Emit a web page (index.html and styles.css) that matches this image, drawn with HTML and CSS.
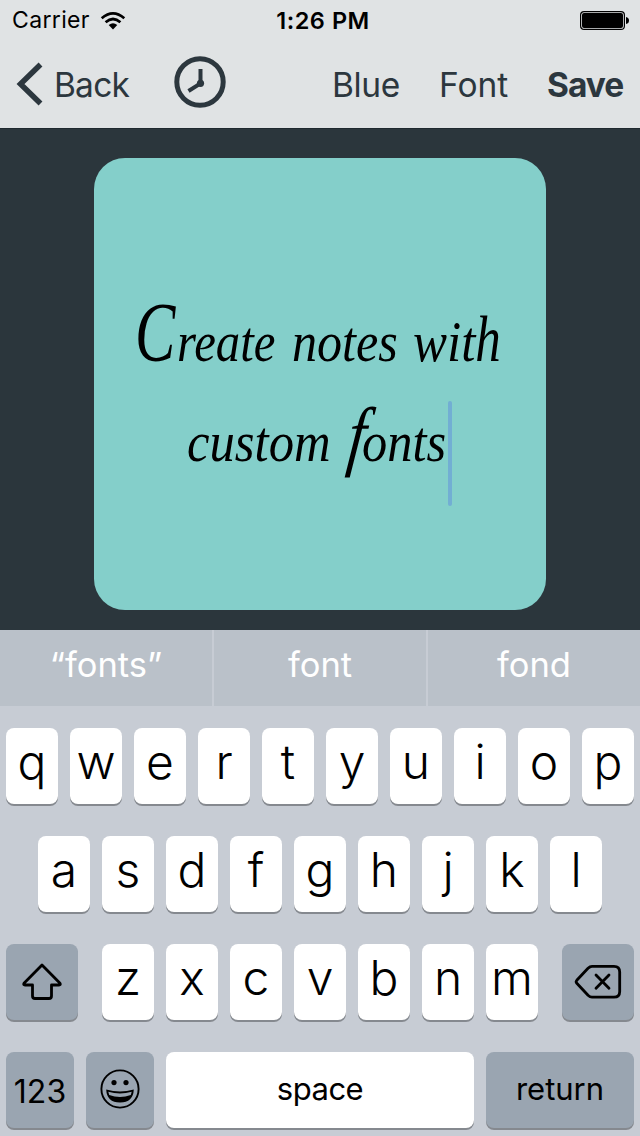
FILE: index.html
```
<!DOCTYPE html>
<html lang="en">
<head>
<meta charset="utf-8">
<title>Notes</title>
<link rel="stylesheet" href="styles.css">
</head>
<body>
<div class="screen">
  <header class="top">
    <div class="status">
      <div class="status-left"><span class="carrier">Carrier</span>
        <svg class="wifi" width="26" height="20" viewBox="0 0 26 20"><g fill="none" stroke="#000" stroke-width="2.7"><path d="M1.7 7.3Q13 -2.5 24.3 7.3"/><path d="M5.6 11.3Q13 4.7 20.4 11.3"/></g><path d="M8.7 14Q13 10.5 17.3 14L13 18.6Z"/></svg>
      </div>
      <span class="time">1:26 PM</span>
      <svg class="battery" width="50" height="20" viewBox="0 0 50 20"><rect x=".6" y=".6" width="43.8" height="17.8" rx="3.5" fill="none" stroke="#000" stroke-width="1.2"/><rect x="2" y="2" width="41" height="15" rx="2"/><path d="M46 6Q49 6.5 49 9.5T46 13Z"/></svg>
    </div>
    <nav class="nav">
      <svg class="chevron" width="28" height="44" viewBox="0 0 28 44"><path d="M24.5 2.5L4.5 22L24.5 41.5" fill="none" stroke="#2c373e" stroke-width="5.5"/></svg>
      <span class="back">Back</span>
      <svg class="clock" width="52" height="52" viewBox="0 0 52 52"><g fill="none" stroke="#2c373e"><circle cx="26" cy="26" r="23.2" stroke-width="5"/><path d="M26.5 13V27.5L14.5 35" stroke-width="4"/></g><circle cx="26.5" cy="27.3" r="3.6" fill="#2c373e"/></svg>
      <span class="blue">Blue</span><span class="font">Font</span><span class="save">Save</span>
    </nav>
  </header>
  <main class="canvas">
    <div class="note">
      <div class="line"><span class="initial">C</span><span class="create">reate</span><span class="notes">notes</span><span class="with">wit<span class="tall-h">h</span></span></div>
      <div class="line second"><span class="custom">custom</span><span class="fonts"><span class="long-f">f</span>onts</span><i class="caret"></i></div>
    </div>
  </main>
  <section class="keyboard">
    <div class="suggestions"><span>“fonts”</span><span>font</span><span>fond</span></div>
    <div class="keys">
      <div class="row"><b>q</b><b>w</b><b>e</b><b>r</b><b>t</b><b>y</b><b>u</b><b>i</b><b>o</b><b>p</b></div>
      <div class="row"><b>a</b><b>s</b><b>d</b><b>f</b><b>g</b><b>h</b><b>j</b><b>k</b><b>l</b></div>
      <div class="row spread">
        <div class="key dark wide"><svg width="42" height="38" viewBox="0 0 42 38"><path d="M21 2L39 20.3Q40 22 38 22H30.5V33Q30.5 35.5 28 35.5H14Q11.5 35.5 11.5 33V22H4Q2 22 3 20.3Z" fill="none" stroke="#000" stroke-width="2.8" stroke-linejoin="round"/></svg></div>
        <div class="row"><b>z</b><b>x</b><b>c</b><b>v</b><b>b</b><b>n</b><b>m</b></div>
        <div class="key dark wide"><svg width="48" height="36" viewBox="0 0 48 36"><path d="M18 2.3H40Q45.7 2.3 45.7 8V27.5Q45.7 33.2 40 33.2H18Q16 33.2 14 31.3L2.8 19.2Q1.5 17.8 2.8 16.3L14 4.2Q16 2.3 18 2.3Z" fill="none" stroke="#000" stroke-width="2.8"/><path d="M22 11L35 24.3M35 11L22 24.3" stroke="#000" stroke-width="2.8" stroke-linecap="round"/></svg></div>
      </div>
      <div class="row">
        <div class="key dark numbers">123</div>
        <div class="key dark emoji"><svg width="40" height="40" viewBox="0 0 40 40"><circle cx="20" cy="20" r="18.6" fill="none" stroke="#000" stroke-width="1.9"/><circle cx="14" cy="13.6" r="2.6"/><circle cx="26" cy="13.6" r="2.6"/><path d="M6.2 20.5Q20 24.5 33.8 20.5Q33.2 33.5 20 33.5T6.2 20.5Z"/><path d="M8.3 22.8Q20 26.3 31.7 22.8L30.8 26Q20 30 9.2 26Z" fill="#98a4b1"/></svg></div>
        <div class="key space">space</div>
        <div class="key dark return">return</div>
      </div>
    </div>
  </section>
</div>
</body>
</html>
```
FILE: styles.css
```
* { box-sizing: border-box; }
body { margin: 0; font-family: Inter, "Liberation Sans", sans-serif; }
svg { display: block; flex: none; }
.screen { width: 640px; height: 1136px; display: flex; flex-direction: column; overflow: hidden; background: #2b363c; }
.top { height: 128px; background: #e0e3e4; }
.status { height: 41px; display: grid; grid-template-columns: 1fr auto 1fr; align-items: center; padding: 0 10px 0 12px; font-size: 23px; line-height: 41px; }
.status-left { display: flex; align-items: center; gap: 10px; }
.carrier { letter-spacing: .35px; }
.time { font-weight: 600; font-size: 23.5px; letter-spacing: .55px; padding-left: 4px; }
.battery { justify-self: end; }
.nav { height: 87px; display: flex; align-items: flex-start; color: #2c373e; font-size: 33.5px; line-height: 88px; white-space: nowrap; }
.chevron { margin: 21px 10px 0 16px; }
.back { width: 120px; letter-spacing: -.8px; }
.clock { margin-top: 15px; }
.blue { margin-left: 106px; width: 107px; letter-spacing: -.4px; }
.font { width: 108px; }
.save { font-weight: 650; letter-spacing: -1px; }
.canvas { height: 502px; padding: 29px 94px; border-top: 1px solid #1f292f; }
.note { width: 452px; height: 452px; border-radius: 31px; background: #84cfca; padding-top: 124px; color: #000; font-family: "Liberation Serif", "Times New Roman", serif; font-style: italic; font-size: 56px; line-height: 102px; }
.line { height: 102px; display: flex; align-items: baseline; padding-left: 41px; white-space: nowrap; }
.line.second { padding-left: 93px; margin-top: 7px; }
.line > span { display: block; flex: none; transform-origin: left; }
.line .initial { width: 42px; font-size: 84px; line-height: 102px; transform: scaleX(.72); }
.line .create { width: 115px; transform: scaleX(.87); }
.line .notes { width: 121px; transform: scaleX(.895); }
.line .with { transform: scaleX(.91); }
.line .custom { width: 161px; transform: scaleX(.905); }
.line .fonts { width: 100px; transform: scaleX(.9); }
.tall-h { display: inline-block; line-height: 1; transform: scaleY(1.18); transform-origin: 50% 83%; }
.long-f { display: inline-block; line-height: 1; transform: skewX(-7deg) scale(1.25, 1.38); transform-origin: 60% 82%; }
.caret { align-self: flex-start; width: 4px; height: 105px; border-radius: 2px; margin-top: 10px; background: #72aed3; }
.keyboard { height: 506px; background: #c7ccd4; }
.suggestions { display: grid; grid-template-columns: 212px 212px 212px; gap: 2px; height: 76px; }
.suggestions span:last-child { width: 214px; padding-right: 2px; }
.suggestions span { background: #bac1c9; color: #fff; font-size: 34.5px; line-height: 70px; text-align: center; }
.keys { display: flex; flex-direction: column; gap: 32px; padding: 22px 6px 0; }
.row { display: flex; justify-content: center; gap: 12px; }
.row.spread { justify-content: space-between; gap: 0; }
.row b, .key { height: 76px; border-radius: 8px; background: #fff; box-shadow: 0 2px 0 #85898f; text-align: center; }
.row b { width: 52px; font-size: 48px; font-weight: 350; line-height: 67px; }
.key.dark { background: #9aa5b1; }
.key.wide { width: 72px; display: flex; align-items: center; justify-content: center; }
.numbers { width: 68px; font-size: 32px; line-height: 80px; }
.emoji { width: 68px; padding: 17px 14px; }
.space { width: 308px; font-size: 31px; line-height: 74px; letter-spacing: -.5px; }
.return { width: 148px; font-size: 31px; line-height: 74px; }
```
